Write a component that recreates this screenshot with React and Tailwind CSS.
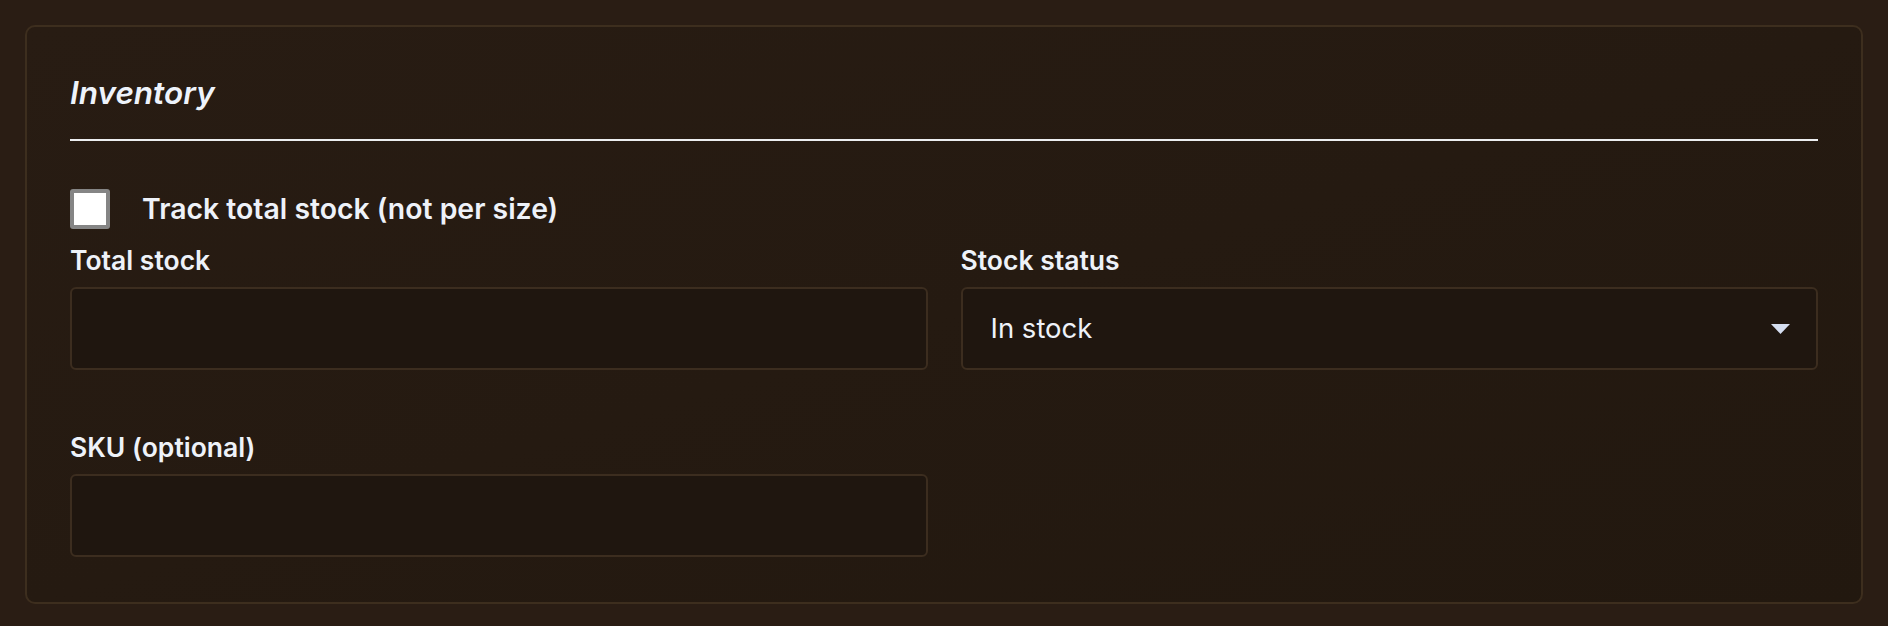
import React from 'react';

const Label = ({ children }) => (
  <label className="block text-[26.5px] leading-[30px] font-semibold text-[#eef2f9]">{children}</label>
);

const inputCls =
  'mt-[12px] block h-[83px] w-full rounded-[6px] border-2 border-[#3c2d1f] bg-[#1f160f] px-[28px] text-[27.5px] text-[#eef2f9] outline-none';

export default function App() {
  return (
    <div className="min-h-[626px] w-full bg-[#2a1d14] p-[25px] font-['Inter',sans-serif]">
      <div className="rounded-[10px] border-2 border-[#3d2e1e] bg-gradient-to-br from-[#281c13] to-[#22180f] px-[43px] pt-[48px] pb-[45px]">
        {/* Header */}
        <h2 className="border-b-2 border-[#eceef0] pb-[28px] text-[31.5px] leading-[36px] font-semibold italic text-[#eef3fb]">
          Inventory
        </h2>

        {/* Track toggle */}
        <div className="mt-[48px] flex items-center gap-[32px]">
          <div className="h-[40px] w-[40px] rounded-[3px] border-[4px] border-[#858585] bg-white" />
          <span className="text-[28.4px] leading-[36px] font-semibold text-[#eef2f9]">Track total stock (not per size)</span>
        </div>

        {/* Fields */}
        <div className="mt-[16px] grid grid-cols-2 gap-x-[33px] gap-y-[62px]">
          <div>
            <Label>Total stock</Label>
            <input className={inputCls} />
          </div>
          <div>
            <Label>Stock status</Label>
            <div className="mt-[12px] flex h-[83px] w-full items-center justify-between rounded-[6px] border-2 border-[#3c2d1f] bg-[#1f160f] pl-[28px] pr-[26px]">
              <span className="text-[27.5px] text-[#eef2f9]">In stock</span>
              <svg width="19" height="10" viewBox="0 0 19 10">
                <polygon points="0,0 19,0 9.5,10" fill="#d5def0" />
              </svg>
            </div>
          </div>
          <div>
            <Label>SKU (optional)</Label>
            <input className={inputCls} />
          </div>
        </div>
      </div>
    </div>
  );
}
